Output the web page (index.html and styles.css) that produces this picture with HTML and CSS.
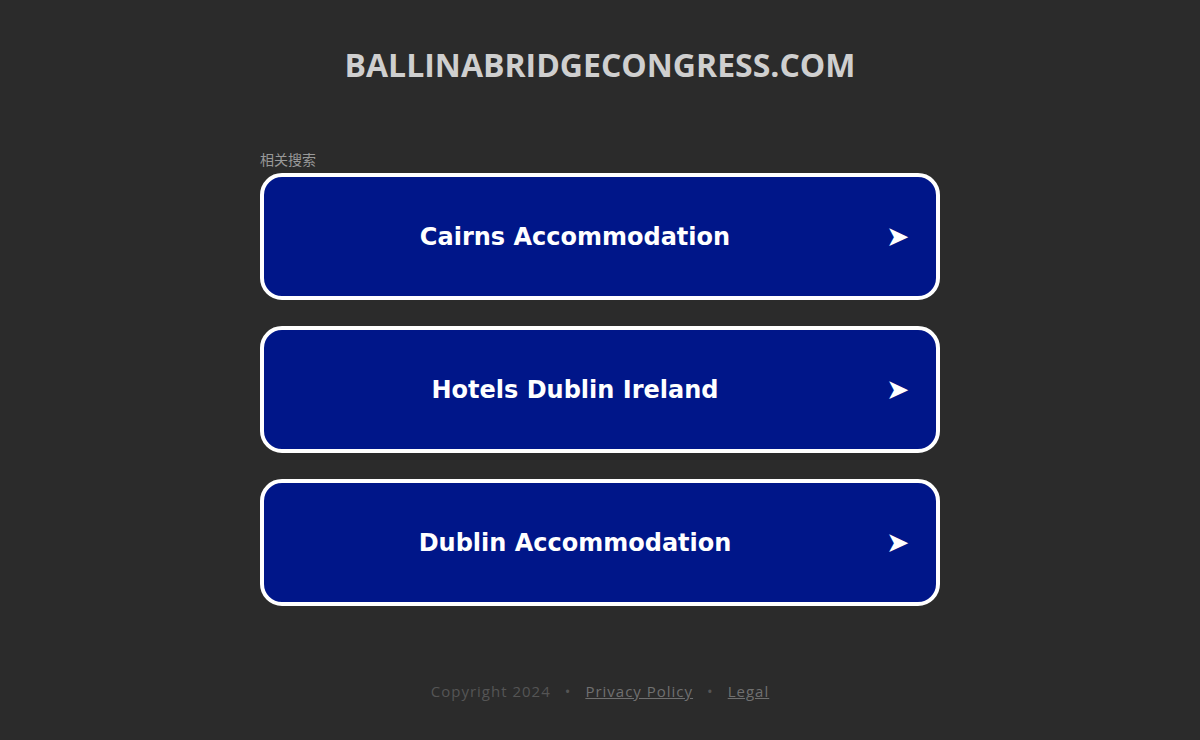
FILE: index.html
```html
<!DOCTYPE html>
<html>
<head>
<meta charset="utf-8">
<link rel="stylesheet" href="styles.css">
</head>
<body>
<div class="page">
  <h1 class="domain">BALLINABRIDGECONGRESS.COM</h1>
  <div class="related">
    <div class="label">相关搜索</div>
    <a class="btn" href="#"><span class="btn-text">Cairns Accommodation</span><span class="arrow">➤</span></a>
    <a class="btn" href="#"><span class="btn-text">Hotels Dublin Ireland</span><span class="arrow">➤</span></a>
    <a class="btn" href="#"><span class="btn-text">Dublin Accommodation</span><span class="arrow">➤</span></a>
  </div>
  <div class="footer">
    <span class="copy">Copyright 2024</span>
    <span class="dot">•</span>
    <a href="#" class="flink">Privacy Policy</a>
    <span class="dot">•</span>
    <a href="#" class="flink">Legal</a>
  </div>
</div>
</body>
</html>
```
FILE: styles.css
```css
html, body {
  margin: 0;
  padding: 0;
  background: #2b2b2b;
}
.page {
  width: 1200px;
  height: 740px;
  display: flex;
  flex-direction: column;
  align-items: center;
}
.domain {
  margin: 45px 0 0 0;
  font-family: "Open Sans", sans-serif;
  font-weight: 700;
  font-size: 32px;
  line-height: 40px;
  color: #cfcfcf;
  letter-spacing: 0;
}
.related {
  width: 680px;
  margin-top: 65px;
  display: flex;
  flex-direction: column;
  gap: 26px;
}
.label {
  font-family: "Noto Sans CJK SC", sans-serif;
  font-size: 14px;
  line-height: 18px;
  color: #999;
  margin-bottom: -23px;
  height: 20px;
}
.btn {
  display: flex;
  align-items: center;
  height: 119px;
  border: 4px solid #fff;
  border-radius: 22px;
  background: #001689;
  color: #fff;
  text-decoration: none;
  padding-right: 28px;
  font-family: "DejaVu Sans", Verdana, sans-serif;
  font-weight: 700;
}
.btn-text {
  flex: 1;
  text-align: center;
  font-size: 24px;
  padding-top: 1px;
}
.arrow {
  width: 22px;
  font-size: 28px;
  text-align: center;
}
.footer {
  margin-top: 75px;
  font-family: "Open Sans", sans-serif;
  font-size: 15px;
  letter-spacing: 1px;
  color: #555;
  display: flex;
  gap: 14px;
}
.flink {
  color: #707070;
  text-decoration: underline;
}
```
